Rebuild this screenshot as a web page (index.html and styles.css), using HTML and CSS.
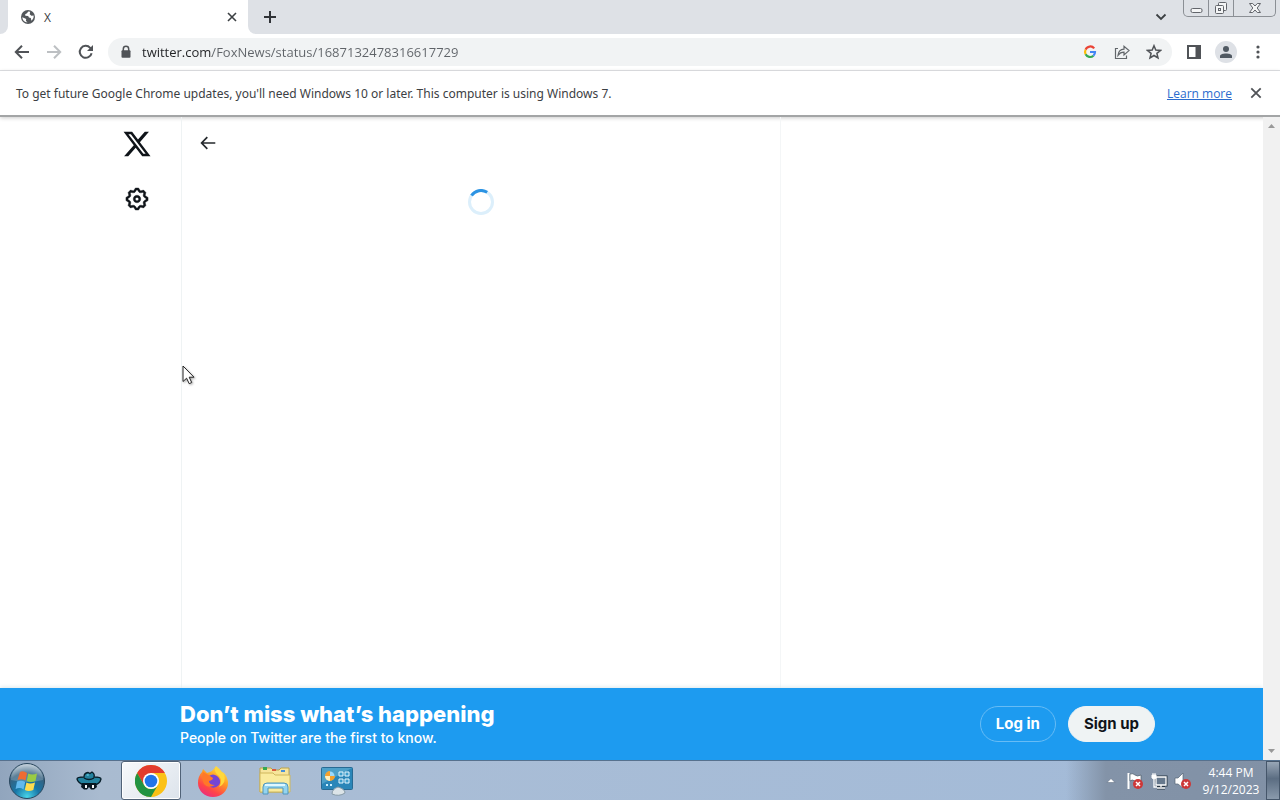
FILE: index.html
```html
<!DOCTYPE html>
<html lang="en">
<head>
<meta charset="utf-8">
<title>X</title>
<link rel="stylesheet" href="styles.css">
</head>
<body>
<header class="tabstrip">
  <div class="edge-tab"></div>
  <div class="tab">
    <svg class="globe" width="16" height="16" viewBox="0 0 16 16"><circle cx="8" cy="8" r="7" fill="#53575b"/><path d="M2.3 8.2 4.6 9.2 6.2 10.1 5.9 12 7.6 13.3C5 13.4 2.4 11.3 2.3 8.2ZM8.2 2.4 7 4.2 5.2 5.2 5.3 6.7 8.2 6.9 8.9 8.6 10.8 9 11.4 11.8C13.2 10.4 13.9 8.5 13.6 6.6L11.4 6.7 9.7 5.3 10.2 2.8Z" fill="#fff"/></svg>
    <span class="tab-title">X</span>
    <button class="icon-btn tab-close" aria-label="Close tab"><svg width="10" height="10" viewBox="0 0 10 10"><path d="M1 1 9 9M9 1 1 9" stroke="#3c4043" stroke-width="1.6"/></svg></button>
  </div>
  <button class="icon-btn new-tab" aria-label="New tab"><svg width="14" height="14" viewBox="0 0 14 14"><path d="M7 1V13M1 7H13" stroke="#303337" stroke-width="2"/></svg></button>
  <button class="icon-btn tab-search" aria-label="Search tabs"><svg width="12" height="8" viewBox="0 0 12 8"><path d="M1.5 1.5 6 6 10.5 1.5" fill="none" stroke="#3c4043" stroke-width="1.8"/></svg></button>
  <div class="window-controls">
    <button class="win-btn" aria-label="Minimize"><svg width="13" height="16" viewBox="0 0 13 16"><rect x="1" y="8.5" width="11" height="4" rx="1.5" fill="#f4f5f6" stroke="#62656b"/></svg></button>
    <button class="win-btn" aria-label="Restore"><svg width="14" height="16" viewBox="0 0 14 16"><g fill="#f4f5f6" stroke="#62656b"><rect x="4.5" y="2.5" width="8" height="8" rx="1"/><rect x="1.5" y="5.5" width="8" height="8" rx="1"/><rect x="4.5" y="8.5" width="2" height="2"/></g></svg></button>
    <button class="win-btn win-close" aria-label="Close"><svg width="14" height="16" viewBox="0 0 14 16"><path d="M1.5 3.5H4.7L7 6 9.3 3.5H12.5L9.2 8 12.5 12.5H9.3L7 10 4.7 12.5H1.5L4.8 8Z" fill="#f4f5f6" stroke="#62656b"/></svg></button>
  </div>
</header>

<nav class="toolbar">
  <button class="icon-btn nav-btn" aria-label="Back"><svg width="16" height="16" viewBox="0 0 16 16"><path d="M15 8H2M8 1.8 1.8 8 8 14.2" fill="none" stroke="#505357" stroke-width="2"/></svg></button>
  <button class="icon-btn nav-btn" aria-label="Forward"><svg width="16" height="16" viewBox="0 0 16 16"><path d="M1 8H14M8 1.8 14.2 8 8 14.2" fill="none" stroke="#bdc0c3" stroke-width="2"/></svg></button>
  <button class="icon-btn nav-btn" aria-label="Reload"><svg width="16" height="16" viewBox="0 0 16 16"><path d="M13.6 9.2A6 6 0 1 1 12.2 3.8L13 4.7" fill="none" stroke="#505357" stroke-width="2"/><path d="M15 1V7H9Z" fill="#505357"/></svg></button>
  <div class="omnibox">
    <svg width="12" height="14" viewBox="0 0 12 14"><path d="M3.3 6V4A2.7 2.7 0 0 1 8.7 4V6" fill="none" stroke="#505357" stroke-width="1.5"/><rect x="1.5" y="5.3" width="9" height="7.4" rx="1" fill="#505357"/></svg>
    <input class="url" type="text" aria-label="Address" value="twitter.com/FoxNews/status/1687132478316617729">
    <button class="icon-btn omni-btn" aria-label="Google"><svg width="14" height="14" viewBox="0 0 14 14"><g fill="none" stroke-width="2.2"><path d="M11.2 3.4A5 5 0 0 0 2.6 4.7" stroke="#ea4335"/><path d="M2.6 4.7A5 5 0 0 0 2.6 9.3" stroke="#fbbc05"/><path d="M2.6 9.3A5 5 0 0 0 10.4 10.7" stroke="#34a853"/><path d="M10.4 10.7A5 5 0 0 0 12 7H7" stroke="#4285f4"/></g></svg></button>
    <button class="icon-btn omni-btn" aria-label="Share"><svg width="16" height="16" viewBox="0 0 16 16"><path d="M4 4.500H1.500V14.500H12.500V11.500M4 11.300C4.300 7.500 6.600 5.500 10 5.200V2.300L15 6.600 10 11V8.200C7.400 8.200 5.600 9 4 11.300Z" fill="none" stroke="#62666a" stroke-width="1.200"/></svg></button>
    <button class="icon-btn omni-btn" aria-label="Bookmark"><svg width="16" height="16" viewBox="0 0 16 16"><path d="M8 1.700 9.800 6 14.500 6.400 10.900 9.400 12 14 8 11.500 4 14 5.100 9.400 1.500 6.400 6.200 6Z" fill="none" stroke="#505357" stroke-width="1.500"/></svg></button>
  </div>
  <button class="icon-btn side-btn" aria-label="Side panel"><svg width="14" height="14" viewBox="0 0 14 14"><path d="M0 0H14V14H0ZM2 2V12H8.500V2Z" fill="#505357" fill-rule="evenodd"/></svg></button>
  <button class="icon-btn profile" aria-label="Profile"><svg width="14" height="14" viewBox="0 0 14 14"><circle cx="7" cy="4" r="3" fill="#505962"/><path d="M1 13V11C1 7.600 13 7.600 13 11V13Z" fill="#505962"/></svg></button>
  <button class="icon-btn menu-btn" aria-label="Menu"><svg width="4" height="14" viewBox="0 0 4 14"><g fill="#505357"><circle cx="2" cy="2" r="1.600"/><circle cx="2" cy="7" r="1.600"/><circle cx="2" cy="12" r="1.600"/></g></svg></button>
</nav>

<aside class="infobar">
  <span class="info-text">To get future Google Chrome updates, you'll need Windows 10 or later. This computer is using Windows 7.</span>
  <a class="learn" href="#">Learn more</a>
  <button class="icon-btn" aria-label="Dismiss"><svg width="12" height="12" viewBox="0 0 12 12"><path d="M1.300 1.300 10.700 10.700M10.700 1.300 1.300 10.700" stroke="#505357" stroke-width="1.800"/></svg></button>
</aside>

<div class="viewport">
  <div class="page">
    <div class="columns">
      <nav class="rail">
        <a class="rail-link" href="#" aria-label="X"><svg width="30" height="30" viewBox="0 0 24 24"><path fill="#0f1419" d="M18.244 2.250h3.308l-7.227 8.260 8.502 11.240H16.170l-5.214-6.817L4.990 21.750H1.680l7.730-8.835L1.254 2.250H8.080l4.713 6.231zm-1.161 17.520h1.833L7.084 4.126H5.117z"/></svg></a>
        <a class="rail-link" href="#" aria-label="Settings"><svg width="26" height="26" viewBox="0 0 24 24"><path fill="#0f1419" stroke="#0f1419" stroke-width=".3" d="M10.540 1.750h2.920l1.570 2.360c.11.170.32.250.53.210l2.530-.59 2.170 2.170-.58 2.540c-.05.200.040.410.210.530l2.360 1.570v2.920l-2.360 1.570c-.17.120-.26.330-.21.530l.58 2.540-2.170 2.170-2.530-.59c-.21-.04-.42.040-.53.210l-1.570 2.360h-2.920l-1.580-2.360c-.11-.17-.32-.25-.52-.21l-2.540.59-2.170-2.170.58-2.540c.05-.2-.03-.41-.21-.53l-2.350-1.570v-2.920L4.100 8.970c.18-.12.260-.33.210-.53L3.730 5.900 5.900 3.730l2.540.590c.200.040.410-.04.520-.21l1.580-2.360zm1.070 2l-.98 1.470C10.050 6.080 9 6.500 7.990 6.270l-1.460-.34-.6.600.33 1.460c.240 1.010-.18 2.070-1.050 2.640l-1.460.98v.78l1.460.98c.87.570 1.290 1.630 1.050 2.640l-.33 1.460.6.600 1.460-.34c1.010-.23 2.060.190 2.640 1.050l.98 1.470h.78l.97-1.470c.58-.86 1.630-1.280 2.650-1.050l1.450.34.61-.6-.34-1.460c-.23-1.010.180-2.070 1.050-2.640l1.470-.98v-.78l-1.470-.98c-.87-.57-1.280-1.630-1.050-2.640l.34-1.460-.61-.6-1.450.34c-1.020.23-2.070-.19-2.650-1.050l-.97-1.470h-.78zM12 10.500c-.83 0-1.500.67-1.500 1.500s.67 1.500 1.500 1.500c.82 0 1.500-.67 1.500-1.500s-.68-1.500-1.500-1.500zM8.500 12c0-1.930 1.560-3.500 3.500-3.500 1.930 0 3.500 1.570 3.500 3.500s-1.570 3.500-3.500 3.500c-1.940 0-3.500-1.570-3.500-3.500z"/></svg></a>
      </nav>
      <main class="timeline">
        <button class="icon-btn back" aria-label="Back"><svg width="16" height="14" viewBox="0 0 16 14"><path d="M15.300 7H2M7.300 1.200 1.600 7 7.300 12.800" fill="none" stroke="#25292d" stroke-width="1.700"/></svg></button>
        <svg class="spinner" width="26" height="26" viewBox="0 0 26 26" role="img" aria-label="Loading"><circle cx="13" cy="13" r="11.500" fill="none" stroke="#dceffb" stroke-width="3"/><path d="M3.500 6.500A11.500 11.500 0 0 1 19.200 3.300" fill="none" stroke="#2b93e3" stroke-width="3"/></svg>
      </main>
    </div>
    <section class="banner">
      <div class="pitch">
        <h2 class="headline">Don’t miss what’s happening</h2>
        <p class="subline">People on Twitter are the first to know.</p>
      </div>
      <div class="actions">
        <button class="pill login">Log in</button>
        <button class="pill signup">Sign up</button>
      </div>
    </section>
  </div>
  <div class="scrollbar"><svg width="7" height="4" viewBox="0 0 7 4"><path d="M0 4 3.500 0 7 4Z" fill="#999"/></svg><svg width="7" height="4" viewBox="0 0 7 4"><path d="M0 0 3.500 4 7 0Z" fill="#999"/></svg></div>
</div>

<footer class="taskbar">
  <button class="task start" aria-label="Start"><svg width="38" height="38" viewBox="0 0 38 38">
    <defs><radialGradient id="orb" cx=".5" cy=".95" r=".9"><stop offset="0" stop-color="#48d5e8"/><stop offset=".4" stop-color="#1776a7"/><stop offset=".75" stop-color="#36617f"/><stop offset="1" stop-color="#a9bccb"/></radialGradient></defs>
    <circle cx="19" cy="19" r="17.500" fill="url(#orb)" stroke="#29475e"/>
    <path d="M3 18A16 16 0 0 1 35 18Q19 22 3 18Z" fill="#fff" opacity=".2"/>
    <path d="M12 10Q15 8 19 11L17.500 18.500Q14 16.500 9.500 18Z" fill="#ee6b32"/><path d="M20.300 11.500Q24 13.500 29 11.500L27.500 19Q22.500 21 18.800 19Z" fill="#9acb43"/><path d="M9 19.500Q13.500 17.800 17.200 20L15.500 27.500Q12 25 7.600 27Z" fill="#62b9ed"/><path d="M18.400 20.500Q22 22.500 27 20.500L25.300 28Q20.500 30 16.800 28Z" fill="#ffdc4e"/></svg></button>
  <button class="task" aria-label="Hat"><svg width="26" height="20" viewBox="0 0 26 20"><path d="M1 8Q1 6 8 6Q8 2 12 1.500L14 2.500 16 1Q19 3 18 6Q25 6 25 8Q24 13 18 14H8Q2 12 1 8Z" fill="#23829f" stroke="#071e2a" stroke-width="1.300"/><path d="M8 7Q13 10 18 7" stroke="#071e2a" stroke-width="1.300" fill="none"/><path d="M10 4 12.500 3V5Z" fill="#6fd0e5"/><path d="M6 12H20L21 16 18 18.500H15L13 16 11 18.500H8L5 16Z" fill="#071620"/><path d="M9 14H11V17H9ZM16 14H18V17H16Z" fill="#f4f7fa"/></svg></button>
  <button class="task active" aria-label="Google Chrome"><svg width="32" height="32" viewBox="0 0 32 32"><circle cx="16" cy="16" r="16" fill="#fbc116"/><path d="M2.140 8A16 16 0 0 1 29.860 8H16L9.070 20Z" fill="#e33b2e"/><path d="M2.140 8A16 16 0 0 0 16 32L22.930 20A8 8 0 0 1 9.070 20Z" fill="#229342"/><circle cx="16" cy="16" r="8" fill="#fff"/><circle cx="16" cy="16" r="6.300" fill="#2274e7"/></svg></button>
  <button class="task" aria-label="Firefox"><svg width="32" height="32" viewBox="0 0 32 32"><defs><linearGradient id="fox" x1=".8" y1="0" x2=".25" y2="1"><stop offset="0" stop-color="#fff04b"/><stop offset=".4" stop-color="#ff9a22"/><stop offset=".75" stop-color="#ff4548"/><stop offset="1" stop-color="#e92b83"/></linearGradient></defs><path d="M19 1Q23 4 25 7L27 8Q31 13 31 18A15 14 0 0 1 1 18Q1 11 5 7L6 4 10 8 13 7Q16 6 19 1Z" fill="url(#fox)"/><path d="M12 11Q16 8 20 11Q25 15 22 20Q17 25 12 21Q9 17 12 11Z" fill="#7545d4"/><path d="M6 7Q10 9 16 13Q16 15 12 16Q12 20 18 20Q11 24 7 19Q4 13 6 7Z" fill="#ff7828"/><path d="M18 2Q17 8 22 11Q26 16 22 22Q30 18 27 9Z" fill="#ffd83b"/></svg></button>
  <button class="task" aria-label="Windows Explorer"><svg width="34" height="32" viewBox="0 0 34 32"><path d="M2 3H13L15 5H21L23 3H31V27H2Z" fill="#f7e59b" stroke="#baa34d"/><path d="M5 2H9V5H5Z" fill="#36a852"/><path d="M14 4H18V6H14Z" fill="#d95b3e"/><path d="M23 5H27V7H23Z" fill="#4a91d6"/><path d="M2 8H15L17 10H32V27H2Z" fill="#faeb9d" stroke="#cfb75d"/><path d="M5 29V22Q5 18 9 18H26Q30 18 30 22V29H25V23H10V29Z" fill="#94d4ef" stroke="#5196bd"/><path d="M7 20H27" stroke="#dff7ff" stroke-width="2"/></svg></button>
  <button class="task" aria-label="Control Panel"><svg width="34" height="30" viewBox="0 0 34 30"><rect x="1.500" y="1.500" width="31" height="22" rx="1" fill="#2a86b8" stroke="#286a93"/><path d="M2 2H32L2 18Z" fill="#72bbd9" opacity=".5"/><circle cx="10" cy="10" r="4.500" fill="#9edafa"/><path d="M10 10V5A5 5 0 1 0 15 10Z" fill="#f4a12e"/><path d="M10 10 5 10A5 5 0 0 0 10 15Z" fill="#fff0bf"/><path d="M19 6H23V10H19ZM25 6H29V10H25ZM19 13H23V17H19ZM25 13H29V17H25Z" fill="#3b9ccb" stroke="#e5f7ff"/><path d="M6 19H14" stroke="#c9efff" stroke-width="2" stroke-dasharray="2 2"/><path d="M12 28Q12 23 18 21Q25 23 25 27Q19 31 12 28Z" fill="#dce4e8" stroke="#879ba7"/></svg></button>
  <div class="tray">
    <svg class="chevron" width="10" height="5" viewBox="0 0 10 5"><path d="M1 4.500 5 .500 9 4.500Z" fill="#fff" stroke="#56677a" stroke-width=".5"/></svg>
    <svg width="18" height="18" viewBox="0 0 18 18"><path d="M2.500 1V17" stroke="#fff" stroke-width="2"/><path d="M4 2Q7 1 9 3T15 3V10Q12 11 9 9T4 9Z" fill="#fff" stroke="#4f5b68" stroke-width=".7"/><circle cx="12" cy="12" r="5" fill="#cd3838"/><path d="M10 10 14 14M14 10 10 14" stroke="#fff" stroke-width="1.500"/></svg>
    <svg width="18" height="18" viewBox="0 0 18 18"><path d="M6 5H16V13H6ZM11 13V15M7 16H15" fill="#67798d" stroke="#273645" stroke-width="3"/><path d="M6 5H16V13H6ZM11 13V15M7 16H15M4 7V15H7" fill="#67798d" stroke="#fff" stroke-width="1.300"/><path d="M2 3H6V6Q4 8 2 6ZM3 1V3M5 1V3" fill="#fff" stroke="#fff"/></svg>
    <svg width="18" height="18" viewBox="0 0 18 18"><path d="M1 6H4L9 1V16L4 12H1Z" fill="#fff" stroke="#566575" stroke-width=".7"/><circle cx="12" cy="12" r="5" fill="#cd3838"/><path d="M10 10 14 14M14 10 10 14" stroke="#fff" stroke-width="1.500"/></svg>
    <div class="clock"><span>4:44 PM</span><span>9/12/2023</span></div>
    <button class="show-desktop" aria-label="Show desktop"></button>
  </div>
</footer>

<svg class="cursor" width="13" height="20" viewBox="0 0 13 20"><path d="M1 1V16.500L4.600 13.200 7.200 18.700 9.700 17.500 7.200 12.200H12Z" fill="#fff" stroke="#222"/></svg>
</body>
</html>
```
FILE: styles.css
```css
* { box-sizing: border-box; }

body {
  display: flex;
  flex-direction: column;
  height: 100vh;
  margin: 0;
  overflow: hidden;
  background: #fff;
  font-family: "Open Sans", "Noto Sans", sans-serif;
  font-size: 12px;
  color: #3c4043;
}

button { font-family: inherit; }
svg { flex: none; display: block; }

.icon-btn {
  display: flex;
  flex: none;
  align-items: center;
  justify-content: center;
  padding: 0;
  border: 0;
  background: none;
}

/* Tab strip */
.tabstrip {
  display: flex;
  align-items: flex-start;
  height: 34px;
  background: #dee1e6;
  background: linear-gradient(to right, #fff 260px, #dee1e6 260px);
}
.edge-tab { width: 8px; height: 34px; background: #dee1e6; border-radius: 0 0 8px 0; }
.tab {
  display: flex;
  align-items: center;
  width: 240px;
  height: 34px;
  padding: 0 10px 0 12px;
  background: #fff;
  border-radius: 8px 8px 0 0;
}
.tab-title { flex: 1; padding-left: 8px; }
.tab-close { width: 12px; height: 16px; }
.new-tab { width: 44px; height: 34px; border-radius: 0 0 0 8px; background: #dee1e6; }
.tab-search { width: 20px; height: 34px; margin-left: auto; }
.window-controls {
  display: flex;
  height: 17px;
  margin: 0 4px 0 12px;
  border: 1px solid #8b8f95;
  border-top: 0;
  border-radius: 0 0 5px 5px;
}
.win-btn {
  display: flex;
  justify-content: center;
  width: 25px;
  padding: 0;
  border: 0;
  border-right: 1px solid #8b8f95;
  background: none;
}
.win-close { width: 41px; border-right: 0; }

/* Toolbar */
.toolbar {
  display: flex;
  align-items: center;
  height: 37px;
  padding: 0 8px 0 6px;
  border-bottom: 1px solid #dadce0;
}
.nav-btn { width: 32px; height: 32px; }
.omnibox {
  display: flex;
  flex: 1;
  align-items: center;
  height: 28px;
  margin-left: 6px;
  padding: 0 2px 0 12px;
  border-radius: 14px;
  background: #f1f3f4;
}
.url {
  flex: 1;
  min-width: 0;
  height: 28px;
  margin-left: 10px;
  padding: 0;
  border: 0;
  outline: 0;
  background: linear-gradient(to right, #202124 70px, #5f6368 70px);
  background-clip: text;
  color: transparent;
  font-family: inherit;
  font-size: 13px;
}
.omni-btn { width: 32px; height: 28px; }
.side-btn { width: 32px; height: 32px; margin-left: 6px; }
.profile { width: 22px; height: 22px; margin: 0 7px 0 5px; border-radius: 50%; background: #dee1e6; }
.menu-btn { width: 28px; height: 32px; }

/* Info bar */
.infobar {
  display: flex;
  align-items: center;
  height: 46px;
  padding: 0 18px 0 16px;
  border-bottom: 2px solid #a3a5a6;
  box-shadow: 0 1px 4px #ccc;
}
.info-text { flex: 1; font-family: "Noto Sans", sans-serif; }
.learn { margin-right: 18px; color: #2b6cce; }

/* Web page */
.viewport { display: flex; flex: 1; min-height: 0; }
.page { display: flex; flex: 1; flex-direction: column; }
.columns {
  display: grid;
  flex: 1;
  grid-template-columns: 182fr 599px 482fr;
}
.rail {
  display: flex;
  flex-direction: column;
  align-items: flex-end;
  gap: 5px;
  padding: 2px 19px 0 0;
  border-right: 1px solid #eff3f4;
}
.rail-link { display: grid; place-items: center; width: 50px; height: 50px; }
.timeline {
  display: flex;
  flex-direction: column;
  align-items: center;
  border-right: 1px solid #f4f6f7;
}
.back { align-self: flex-start; width: 52px; height: 52px; }
.spinner { margin-top: 20px; }

.banner {
  display: flex;
  align-items: center;
  justify-content: space-between;
  height: 72px;
  padding: 0 108px 0 180px;
  background: #1d9bf0;
  box-shadow: 0 -1px 4px #dde8ec;
  color: #fff;
}
.headline { margin: 0; font: 800 22px/28px Inter, sans-serif; }
.subline { margin: 0; font: 500 14px/20px Inter, sans-serif; }
.actions { display: flex; gap: 12px; }
.pill {
  height: 36px;
  padding: 0 15px;
  border: 1px solid #67bcf5;
  border-radius: 18px;
  background: transparent;
  color: #fff;
  font: 700 15px/20px Inter, sans-serif;
}
.signup { border-color: #eff3f4; background: #eff3f4; color: #0f1419; }

.scrollbar {
  display: flex;
  flex-direction: column;
  align-items: center;
  justify-content: space-between;
  width: 17px;
  padding: 7px 0;
  background: #f1f1f1;
}

/* Taskbar */
.taskbar {
  display: flex;
  align-items: stretch;
  height: 40px;
  border-top: 1px solid #56718e;
  background: linear-gradient(to right, #91a5bd, #a9bbd0 100px, #a9bdd6 400px, #a2bad8);
}
.task {
  display: grid;
  place-items: center;
  width: 60px;
  margin-right: 2px;
  padding: 0;
  border: 1px solid transparent;
  background: none;
}
.start { width: 54px; margin-right: 5px; }
.active {
  border-color: #506277;
  border-radius: 3px;
  background: linear-gradient(135deg, #f7f9fb, #dce3eb);
  box-shadow: inset 0 0 0 1px #fff;
}
.tray {
  display: flex;
  align-items: center;
  gap: 6px;
  margin-left: auto;
  padding-left: 40px;
  background: linear-gradient(to right, transparent, #8393a8 40px, #8191a6);
}
.chevron { margin-right: 4px; }
.clock {
  display: flex;
  flex-direction: column;
  align-items: center;
  width: 66px;
  margin-right: -4px;
  color: #fff;
  font-size: 12px;
  line-height: 17px;
}
.show-desktop {
  align-self: stretch;
  width: 14px;
  padding: 0;
  border: 1px solid #45566a;
  background: linear-gradient(#98a6b6, #5b6d82 45%, #8a9aac);
}

.cursor { position: absolute; top: 365px; left: 182px; filter: drop-shadow(1px 1px 1px #aaa); }
```
